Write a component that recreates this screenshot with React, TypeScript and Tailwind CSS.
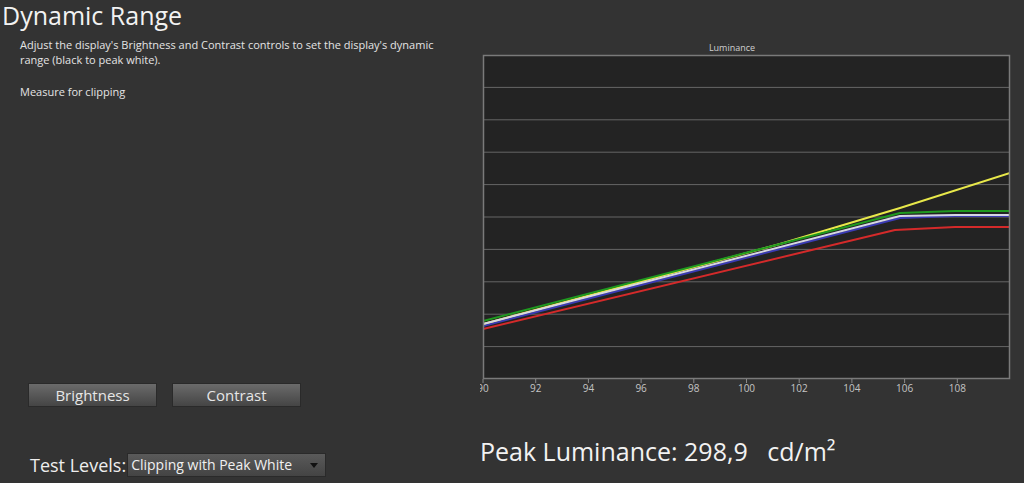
const PLOT_L = 13;
const PLOT_R = 540;
const PLOT_T = 15;
const PLOT_B = 339;
const X_STEP = (PLOT_R - PLOT_L) / 20;

const gridYs = Array.from({ length: 9 }, (_, i) => PLOT_T + ((i + 1) * (PLOT_B - PLOT_T)) / 10);
const ticks = [90, 92, 94, 96, 98, 100, 102, 104, 106, 108];

// drawn in order: yellow sits under green/white until it climbs above them
const series = [
  { color: "#d42a2a", points: "13,289 425,190 485,187 540,187" },
  { color: "#3a3ab4", points: "13,286 430,178 485,176 540,176" },
  { color: "#e8e84a", points: "13,284 310,204 430,168 540,133" },
  { color: "#d6d6e4", points: "13,284 430,176 485,175 540,175" },
  { color: "#1f9a1f", points: "13,281 310,204 430,173 485,171 540,171" },
];

function LuminanceChart() {
  return (
    <svg width={554} height={360} className="block">
      <defs>
        <clipPath id="plot">
          <rect x={PLOT_L} y={PLOT_T} width={PLOT_R - PLOT_L} height={PLOT_B - PLOT_T} />
        </clipPath>
        <clipPath id="axis">
          <rect x={10} y={PLOT_B} width={544} height={30} />
        </clipPath>
      </defs>
      <text x={262} y={11} fill="#d0d0d0" fontSize={9} textAnchor="middle">
        Luminance
      </text>
      <rect x={PLOT_L} y={PLOT_T} width={PLOT_R - PLOT_L} height={PLOT_B - PLOT_T} fill="#232323" />
      {gridYs.map((y) => (
        <line key={y} x1={PLOT_L} x2={PLOT_R} y1={y} y2={y} stroke="#666" strokeWidth={1} />
      ))}
      <g clipPath="url(#plot)" fill="none" strokeWidth={2} strokeLinejoin="round">
        {series.map((s) => (
          <polyline key={s.color} points={s.points} stroke={s.color} />
        ))}
      </g>
      <rect
        x={PLOT_L + 0.5}
        y={PLOT_T + 0.5}
        width={PLOT_R - PLOT_L - 1}
        height={PLOT_B - PLOT_T - 1}
        fill="none"
        stroke="#7a7a7a"
        strokeWidth={1.5}
      />
      <g clipPath="url(#axis)">
        {ticks.map((v) => {
          const x = PLOT_L + (v - 90) * X_STEP;
          return (
            <g key={v}>
              <line x1={x} x2={x} y1={PLOT_B} y2={PLOT_B + 4} stroke="#8a8a8a" />
              <text x={x} y={PLOT_B + 13} fill="#c4c4c4" fontSize={10} textAnchor="middle">
                {v}
              </text>
            </g>
          );
        })}
      </g>
    </svg>
  );
}

function GrayButton({ label }: { label: string }) {
  return (
    <button className="w-[129px] h-[24px] border border-[#2a2a2a] bg-gradient-to-b from-[#6b6b6b] to-[#454545] text-[15px] leading-none text-[#e6e6e6]">
      {label}
    </button>
  );
}

export default function App() {
  return (
    <div
      className="w-[1024px] h-[483px] bg-[#333333] flex overflow-hidden text-[#ececec]"
      style={{ fontFamily: '"Open Sans", sans-serif' }}
    >
      <div className="w-[470px] h-full flex flex-col pb-[6px]">
        <h1 className="pl-[2px] pt-[1px] text-[25px] leading-[29px] text-[#f2f2f2]">Dynamic Range</h1>
        <div className="pl-[20px] pr-[20px] mt-[7px] text-[11px] leading-[15px] text-[#e4e4e4]">
          <p>Adjust the display's Brightness and Contrast controls to set the display's dynamic range (black to peak white).</p>
          <p className="mt-[17px]">Measure for clipping</p>
        </div>
        <div className="mt-auto flex gap-[15px] pl-[28px]">
          <GrayButton label="Brightness" />
          <GrayButton label="Contrast" />
        </div>
        <div className="mt-[46px] flex items-center pl-[30px]">
          <span className="text-[18px] leading-none text-[#eeeeee]">Test Levels:</span>
          <div className="ml-[1px] w-[199px] h-[24px] flex items-center justify-between pl-[3px] pr-[7px] border border-[#2a2a2a] bg-gradient-to-b from-[#5a5a5a] to-[#444444]">
            <span className="text-[14px] leading-none text-[#f0f0f0]">Clipping with Peak White</span>
            <span className="w-0 h-0 border-l-[4px] border-r-[4px] border-t-[5px] border-l-transparent border-r-transparent border-t-[#111]" />
          </div>
        </div>
      </div>
      <div className="flex-1 flex flex-col">
        <div className="mt-[40px]">
          <LuminanceChart />
        </div>
        <div className="pl-[10px] mt-[39px] text-[25px] leading-none text-[#f2f2f2]">
          Peak Luminance: 298,9&nbsp;&nbsp; cd/m²
        </div>
      </div>
    </div>
  );
}
